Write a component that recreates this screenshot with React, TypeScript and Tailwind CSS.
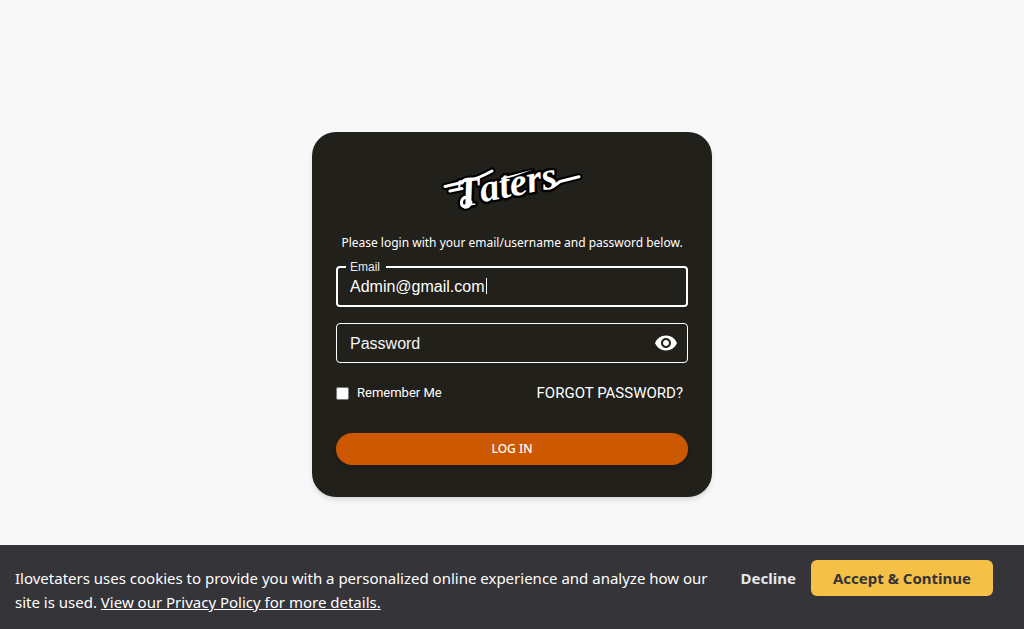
import { useState } from 'react';

function Logo() {
  const swooshes = (
    <>
      <path d="M5 22.500 L22 18.500" />
      <path d="M10 27 L22 24.500" />
      <path d="M22 19 Q23 14.500 33 15 Q37 15 52 7" />
      <path d="M31 38 Q29 44 24.500 43 Q20 41 22 36 Q24 32 28 34" />
      <path d="M113 22 Q116 21 120 17.500 L139 12.700" />
    </>
  );
  return (
    <svg
      viewBox="0 0 144 52"
      className="h-13 w-36 overflow-visible"
      strokeLinecap="round"
      strokeLinejoin="round"
      aria-label="Taters"
    >
      <g fill="none" stroke="#000" strokeWidth="7">
        {swooshes}
      </g>
      <path d="M62 13 L93 6 L90 16 L66 24 Z" fill="#000" stroke="#000" strokeWidth="4" />
      <g
        className="font-['Liberation_Serif',serif] font-bold italic"
        fill="#fff"
        stroke="#000"
        strokeWidth="5"
        paintOrder="stroke"
      >
        <text transform="rotate(-8 20 43)" x="18" y="43" fontSize="40">
          T
        </text>
        <text transform="rotate(-11 43 38)" x="42" y="38" fontSize="39">
          aters
        </text>
      </g>
      <g fill="none" stroke="#fff" strokeWidth="3">
        {swooshes}
      </g>
      <path d="M61 14 L93 5.500 L74 12.500 L61 15.500 Z" fill="#fff" />
    </svg>
  );
}

function EyeIcon() {
  return (
    <svg viewBox="0 0 24 24" className="size-6" fill="currentColor" aria-hidden="true">
      <path d="M12 4.5C7 4.5 2.730 7.610 1 12c1.730 4.390 6 7.500 11 7.500s9.270-3.110 11-7.500c-1.730-4.390-6-7.500-11-7.500M12 17c-2.760 0-5-2.240-5-5s2.240-5 5-5 5 2.240 5 5-2.240 5-5 5m0-8c-1.660 0-3 1.340-3 3s1.340 3 3 3 3-1.340 3-3-1.340-3-3-3" />
    </svg>
  );
}

export default function App() {
  const [email, setEmail] = useState('Admin@gmail.com');
  const [touched, setTouched] = useState(false);
  const [password, setPassword] = useState('');
  const [visible, setVisible] = useState(false);
  const [cookieBar, setCookieBar] = useState(true);

  return (
    <div className="min-h-screen bg-[#f8f8f8] font-['Liberation_Sans',sans-serif]">
      <main className="flex min-h-screen items-center justify-center">
        <form
          onSubmit={(e) => e.preventDefault()}
          className="flex w-full max-w-[400px] flex-col rounded-3xl bg-[#22201a] px-6 pt-8 pb-8 text-white shadow-md"
        >
          <div className="flex justify-center">
            <Logo />
          </div>
          <p className="mt-[17px] text-center font-['Noto_Sans',sans-serif] text-xs leading-5">
            Please login with your email/username and password below.
          </p>

          <div className="relative mt-[13px] flex h-[41px] rounded border-2 border-white">
            <label
              htmlFor="email"
              className="absolute -top-[7px] left-2 bg-[#22201a] pr-1.5 pl-1 text-xs leading-3 text-gray-200"
            >
              Email
            </label>
            <input
              id="email"
              type="text"
              value={email}
              onFocus={() => setTouched(true)}
              onChange={(e) => setEmail(e.target.value)}
              className="w-full bg-transparent px-3 text-base outline-none"
            />
            {!touched && (
              <span aria-hidden="true" className="pointer-events-none absolute top-2.5 left-[148px] h-4 w-px bg-white" />
            )}
          </div>

          <div className="mt-4 flex h-10 items-center rounded border border-white pr-[9px]">
            <input
              id="password"
              type={visible ? 'text' : 'password'}
              aria-label="Password"
              placeholder="Password"
              value={password}
              onChange={(e) => setPassword(e.target.value)}
              className="h-full w-full bg-transparent px-[13px] pt-0.5 text-base outline-none placeholder:text-gray-100"
            />
            <button
              type="button"
              aria-label="Toggle password visibility"
              onClick={() => setVisible(!visible)}
            >
              <EyeIcon />
            </button>
          </div>

          <div className="mt-5 flex items-center justify-between pr-[5px] font-['Roboto',sans-serif]">
            <label className="flex items-center gap-2 text-[13px] leading-5">
              <input type="checkbox" className="size-[13px]" />
              Remember Me
            </label>
            <button type="button" className="text-[15px] leading-5">
              FORGOT PASSWORD?
            </button>
          </div>

          <button
            type="submit"
            className="mt-[30px] h-8 rounded-full bg-[#cc5801] font-['Noto_Sans',sans-serif] text-xs font-medium shadow-md"
          >
            LOG IN
          </button>
        </form>
      </main>

      {cookieBar && (
        <aside className="fixed inset-x-0 bottom-0 flex items-start bg-[#353439] p-[15px] font-['Noto_Sans',sans-serif] text-[15px] leading-6 text-white">
          <p className="flex-1 pt-1.5">
            Ilovetaters uses cookies to provide you with a personalized online experience and analyze how our site is
            used.{' '}
            <a href="#privacy" className="underline">
              View our Privacy Policy for more details.
            </a>
          </p>
          <div className="flex items-center pr-4 pl-4 font-bold">
            <button type="button" onClick={() => setCookieBar(false)} className="h-9 px-[15px] text-gray-200">
              Decline
            </button>
            <button
              type="button"
              onClick={() => setCookieBar(false)}
              className="h-9 rounded-md bg-[#f4c046] px-[22px] text-[#353439]"
            >
              Accept &amp; Continue
            </button>
          </div>
        </aside>
      )}
    </div>
  );
}
